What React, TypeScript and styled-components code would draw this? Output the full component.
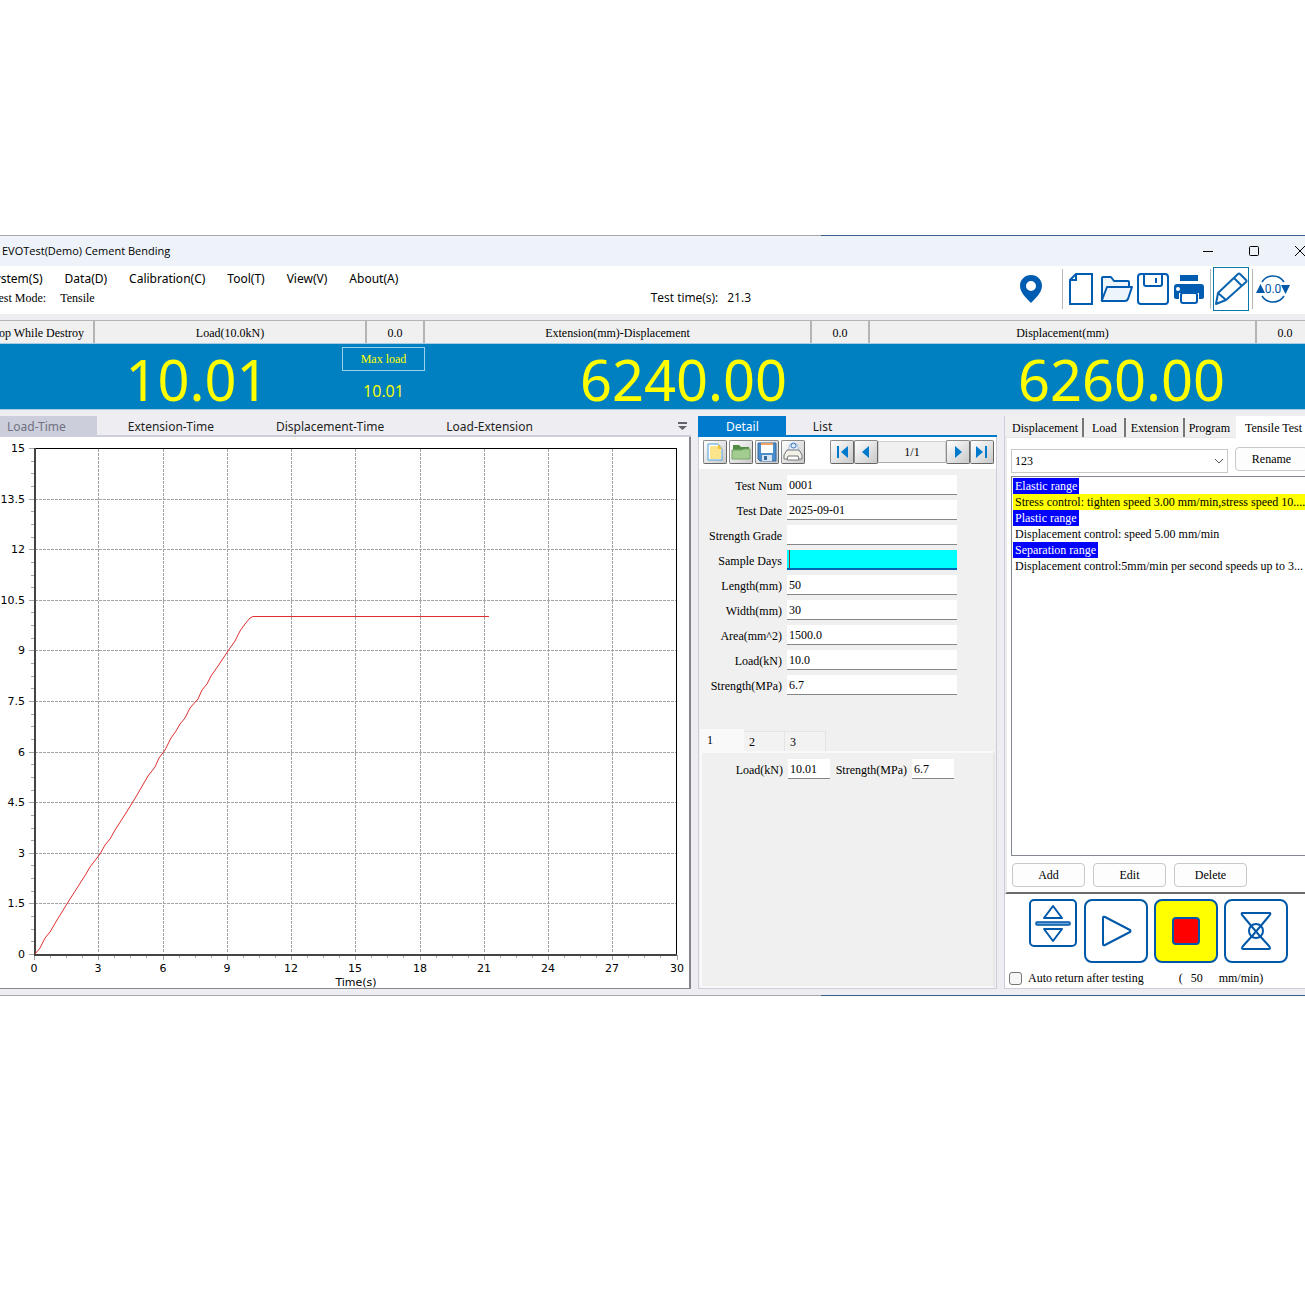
import React, { useState } from 'react';
import styled, { createGlobalStyle, css } from 'styled-components';

const serif = '"Liberation Serif", "Times New Roman", serif';
const sans = '"Open Sans", "Segoe UI", sans-serif';
const ui = '"Noto Sans", "Segoe UI", sans-serif';
const blue = '#0058a8';

const GlobalStyle = createGlobalStyle`
  * { box-sizing: border-box; }
  body { margin: 0; background: #fff; color: #000; font: 12px/16px ${serif}; }
  button, input, select { font: inherit; color: inherit; margin: 0; padding: 0; border: 0; border-radius: 0; background: none; outline: 0; }
  svg { display: block; }
`;

const Page = styled.div`
  overflow: hidden;
  padding: 235px 0;
`;

const AppWindow = styled.main`
  margin: 0 -10px 0 -20px;
  background: #eeeef2;
`;

const Edge = styled.div`
  height: 1px;
  background: linear-gradient(90deg, #a6a6ac 63%, #3c6188 63%);
`;

const TitleBar = styled.header`
  display: flex;
  align-items: center;
  justify-content: space-between;
  height: 30px;
  padding: 0 7px 1px 22px;
  background: #edf3f9;
`;

const Title = styled.h1`
  margin: 0;
  font: 11px/16px ${sans};
`;

const Captions = styled.div`
  display: flex;
  gap: 32px;
`;

const CaptionButton = styled.button`
  width: 14px;
  height: 14px;
`;

const Ribbon = styled.div`
  display: flex;
  height: 48px;
  background: #fff;
`;

const RibbonLeft = styled.div`
  flex: 1;
  display: flex;
  flex-direction: column;
  padding-top: 4px;
`;

const Menu = styled.nav`
  display: flex;
  gap: 22px;
  padding-left: 8px;
  font: 12px/18px ${ui};
`;

const MenuButton = styled.button`
  white-space: nowrap;
`;

const Status = styled.div`
  display: flex;
  align-items: center;
  height: 20px;
  padding: 0 262px 0 12px;
`;

const Mode = styled.span`
  margin-right: 14px;
`;

const Clock = styled.span`
  display: flex;
  gap: 9px;
  margin-left: auto;
  font: 12px/16px ${sans};
`;

const Tools = styled.div`
  display: flex;
  align-items: center;
  padding: 0 24px 2px 0;
`;

const ToolButton = styled.button<{ $active?: boolean }>`
  display: grid;
  place-items: center;
  width: 36px;
  height: 44px;
  ${p => p.$active && css`border: 1px solid #0a78a8;`}
`;

const Rule = styled.span<{ $wide?: boolean }>`
  width: 1px;
  height: 40px;
  margin: ${p => (p.$wide ? '0 0 0 13px' : '0 2px 0 3px')};
  background: #b8b8b8;
`;

const Meters = styled.section`
  display: grid;
  grid-template-columns: repeat(3, minmax(0, 1fr));
  padding-top: 6px;
`;

const MeterHead = styled.div`
  display: flex;
  height: 24px;
  border-top: 1px solid #b4b4b4;
  border-bottom: 1px solid #a8cde4;
  background: #f0f0f0;
`;

const HeadButton = styled.button<{ $width?: number }>`
  ${p => (p.$width ? `flex: 0 0 ${p.$width}px;` : 'flex: 1;')}
  padding-top: 2px;
  border-right: 2px solid #b4b4b4;
  white-space: nowrap;
`;

const MeterBody = styled.div`
  display: flex;
  height: 66px;
  border-bottom: 1px solid #a8cde4;
  background: #0080c0;
  color: #ff0;
`;

const Reading = styled.output<{ $inset: number }>`
  flex: 1;
  padding-left: ${p => p.$inset}px;
  text-align: center;
  font: 56px/70px ${ui};
`;

const Peak = styled.div`
  width: 83px;
  padding-top: 3px;
  text-align: center;
`;

const PeakButton = styled.button`
  width: 100%;
  height: 24px;
  border: 1px solid #9cd0ec;
`;

const PeakValue = styled.output`
  display: block;
  padding-top: 8px;
  font: 16px/24px ${sans};
`;

const Workspace = styled.div`
  display: grid;
  grid-template-columns: minmax(0, 1fr) 299px 311px;
  gap: 7px;
  padding: 6px 0;
`;

const Column = styled.section`
  display: flex;
  flex-direction: column;
  min-width: 0;
`;

const TabBar = styled.div<{ $color: string }>`
  display: flex;
  height: 21px;
  border-bottom: 2px solid ${p => p.$color};
`;

const Tab = styled.button<{ $active?: boolean; $tone?: 'grey' | 'blue' }>`
  padding: 1px ${p => (p.$tone === 'blue' ? 27 : 31)}px 0;
  font: 12px/20px ${ui};
  color: #1e1e1e;
  white-space: nowrap;
  ${p => p.$tone === 'grey' && css`background: #cccedb; color: #717182; padding: 1px 31px 0 27px;`}
  ${p => p.$tone === 'blue' && p.$active && css`padding-left: 28px; background: #007acc; color: #fff;`}
`;

const Overflow = styled.button`
  width: 18px;
  margin-left: auto;
`;

const ChartBox = styled.div`
  flex: 1;
  border-right: 2px solid #85858d;
  border-bottom: 1px solid #85858d;
  background: #fff;
`;

const DetailBody = styled.div`
  flex: 1;
  display: flex;
  flex-direction: column;
  border: 1px solid #cccedb;
  border-top: 0;
  background: #f0f0f0;
`;

const RecordBar = styled.div`
  display: flex;
  align-items: center;
  height: 32px;
  padding: 0 2px 2px 4px;
  gap: 2px;
  background: #fff;
`;

const RecordButton = styled.button`
  display: grid;
  place-items: center;
  width: 24px;
  height: 24px;
  border: 1px solid #8c8c8c;
  border-right-color: #666;
  border-bottom-color: #666;
  border-radius: 2px;
  background: linear-gradient(135deg, #fff, #c8c8c8);
`;

const Pager = styled.div`
  display: flex;
  align-items: center;
  margin-left: auto;
`;

const PageCount = styled.output`
  width: 68px;
  height: 22px;
  border: 1px solid #d0d0d0;
  border-bottom-color: #aaa;
  background: #f0f0f0;
  text-align: center;
  line-height: 20px;
`;

const Form = styled.form`
  display: grid;
  grid-template-columns: 83px 170px;
  gap: 5px;
  padding-top: 6px;
`;

const Label = styled.label`
  padding-top: 3px;
  text-align: right;
  white-space: nowrap;
`;

const Field = styled.input<{ $focus?: boolean }>`
  width: 100%;
  height: 20px;
  padding: 1px 2px 0;
  border-bottom: 1px solid #868686;
  background: #fff;
  ${p => p.$focus && css`
    border-bottom: 2px solid #0067b0;
    background: linear-gradient(90deg, #0ff 2px, #804040 2px, #804040 3px, #0ff 3px);
  `}
`;

const SpecimenTabs = styled.div`
  display: flex;
  align-items: flex-end;
  margin-top: 34px;
  padding-left: 1px;
`;

const SpecimenTab = styled.button<{ $active?: boolean }>`
  width: ${p => (p.$active ? 44 : 41)}px;
  height: ${p => (p.$active ? 22 : 20)}px;
  padding-left: ${p => (p.$active ? 7 : 5)}px;
  border: 1px solid #e4e4e4;
  border-width: ${p => (p.$active ? '0' : '1px 1px 0 0')};
  background: ${p => (p.$active ? '#f9f9f9' : '#f2f2f2')};
  text-align: left;
`;

const Specimen = styled.form`
  flex: 1;
  display: grid;
  grid-template-columns: 81px 42px 72px 42px;
  align-content: start;
  column-gap: 5px;
  margin: 0 1px;
  padding-top: 6px;
  border: 2px solid #f9f9f9;
  border-right: 2px solid #e8e8e8;
`;

const Control = styled.div`
  flex: 1;
  display: flex;
  flex-direction: column;
  border-left: 1px solid #cccedb;
  border-bottom: 1px solid #cccedb;
  background: #fff;
`;

const Modes = styled.div`
  display: flex;
  align-items: flex-end;
  height: 22px;
  padding-left: 3px;
  border-bottom: 1px solid #e6e6e6;
  background: #f0f0f0;
`;

const ModeTab = styled.button<{ $active?: boolean; $pad: number }>`
  height: 19px;
  margin-right: 1px;
  padding: 1px ${p => p.$pad}px 0;
  border-right: 2px solid #777;
  background: #f0f0f0;
  white-space: nowrap;
  &:nth-last-child(2) { border-color: transparent; }
  ${p => p.$active && css`border: 0; background: #fff; box-shadow: 0 -2px #fff, 0 1px #fff;`}
`;

const Program = styled.div`
  display: flex;
  flex-direction: column;
  height: 456px;
  padding: 9px 0 0 4px;
  border-left: 2px solid #ececec;
  border-bottom: 2px solid #6c6c6c;
`;

const ProgramHead = styled.div`
  display: flex;
  gap: 7px;
`;

const SelectBox = styled.div`
  display: flex;
  align-items: center;
  width: 217px;
  height: 24px;
  margin-top: 2px;
  padding-right: 3px;
  border: 1px solid #c8c8c8;
`;

const Select = styled.select`
  flex: 1;
  height: 100%;
  padding-left: 3px;
  appearance: none;
`;

const PushButton = styled.button`
  width: 73px;
  height: 24px;
  border: 1px solid #c8c8c8;
  border-radius: 4px;
  background: #fdfdfd;
`;

const Steps = styled.ul`
  flex: 1;
  margin: 3px 0 0;
  padding: 1px;
  border: 1px solid #828790;
  list-style: none;
`;

const Step = styled.li<{ $current?: boolean }>`
  padding-left: 2px;
  background: ${p => (p.$current ? '#ff0' : 'transparent')};
  white-space: nowrap;
`;

const StepHead = styled.li`
  width: max-content;
  padding: 0 2px;
  background: #00f;
  color: #fff;
`;

const Actions = styled.div`
  display: flex;
  gap: 8px;
  padding: 7px 0 5px 1px;
`;

const Machine = styled.div`
  display: flex;
  gap: 6px;
  padding: 5px 0 0 24px;
`;

const MachineButton = styled.button<{ $small?: boolean; $stop?: boolean }>`
  display: grid;
  place-items: center;
  width: ${p => (p.$small ? 48 : 64)}px;
  height: ${p => (p.$small ? 48 : 64)}px;
  margin-right: ${p => (p.$small ? 1 : 0)}px;
  border: 2px solid ${blue};
  border-radius: ${p => (p.$small ? 5 : 8)}px;
  background: ${p => (p.$stop ? '#ff0' : '#fff')};
`;

const ReturnRow = styled.div`
  display: flex;
  align-items: center;
  padding: 7px 0 0 4px;
`;

const Check = styled.input`
  appearance: none;
  width: 13px;
  height: 13px;
  margin-right: 6px;
  border: 1px solid #777;
  border-radius: 3px;
  background: #f6f6f6;
`;

const Speed = styled.span`
  display: flex;
  gap: 8px;
  margin-left: 35px;
`;

const SpeedInput = styled.input`
  width: 20px;
`;

const X0 = 34;
const Y0 = 954;
const STEP_X = 64.25;
const STEP_Y = 50.6;
const xs = Array.from({ length: 11 }, (_, i) => Math.round(X0 + i * STEP_X));
const ys = Array.from({ length: 11 }, (_, i) => Math.round(Y0 - i * STEP_Y));
const curve =
  '35,954 40,948 45,938 50,932 57,920 70,899 86,874 90,867 100,854 105,845 110,839 115,830 126,813 137,795 148,776 155,767 159,758 165,750 171,738 176,731 180,724 185,718 190,708 198,699 202,690 207,684 211,676 218,666 230,648 235,641 240,631 245,624 250,618 253,616.5 489,616.5';

function Chart() {
  return (
    <svg viewBox="-20 437 709 551" width="100%" role="img" aria-label="Load against time">
      <g shapeRendering="crispEdges" stroke="#a4a4a4" fill="none">
        {xs.slice(1, 10).map(x => <path key={x} d={`M${x}.5 449V953`} strokeDasharray="3 1" />)}
        {ys.slice(1, 10).map(y => <path key={y} d={`M35 ${y}.5H677`} strokeDasharray="3 1" />)}
        {xs.map(x => <path key={x} d={`M${x}.5 955v5`} />)}
        {ys.map(y => <path key={y} d={`M29 ${y}.5h5`} />)}
        {Array.from({ length: 40 }, (_, i) => <path key={i} d={`M${Math.round(X0 + (i * STEP_X) / 4)}.5 956v2`} />)}
        {Array.from({ length: 40 }, (_, i) => <path key={i} d={`M31 ${Math.round(Y0 - (i * STEP_Y) / 4)}.5h3`} />)}
        <path d="M34 448.5H676.5V954" stroke="#000" />
        <path d="M34.5 448V954.5H677" stroke="#444" strokeWidth="2" />
      </g>
      <polyline points={curve} fill="none" stroke="#e03030" />
      <g fontFamily='"DejaVu Sans", Verdana, sans-serif' fontSize="11" fill="#000">
        {ys.map((y, i) => <text key={y} x="25" y={y + 4} textAnchor="end">{i * 1.5}</text>)}
        {xs.map((x, i) => <text key={x} x={x} y="972" textAnchor="middle">{i * 3}</text>)}
        <text x="356" y="986" textAnchor="middle">Time(s)</text>
      </g>
    </svg>
  );
}

const PinIcon = () => (
  <svg width="24" height="30" viewBox="0 0 24 30"><path fillRule="evenodd" fill="#005cb0" d="M12 1C5.700 1 1 5.700 1 12c0 6 6 12 11 17 5-5 11-11 11-17C23 5.700 18.300 1 12 1Zm0 6a5 5 0 1 1 0 10 5 5 0 0 1 0-10Z" /></svg>
);
const FileIcon = () => (
  <svg width="26" height="34" viewBox="0 0 26 34" fill="none" stroke="#005cb0" strokeWidth="2"><path d="M8 2H24V32H2V8ZM8 2V8H2" /></svg>
);
const FolderIcon = () => (
  <svg width="34" height="28" viewBox="0 0 34 28" fill="#edf5fb" stroke="#005cb0" strokeWidth="2" strokeLinejoin="round"><path d="M2 26V3q0-1 1-1h8l3 4h14q1 0 1 1v5" /><path d="M2 25 7 12H32L28 24q-1 2-3 2H3Q1 26 2 25Z" /></svg>
);
const SaveIcon = () => (
  <svg width="34" height="34" viewBox="0 0 34 34" fill="none" stroke="#005cb0" strokeWidth="2"><rect x="2" y="2" width="30" height="30" rx="3" /><path d="M8 2V12q0 2 2 2H24q2 0 2-2V2M20 6v5" /></svg>
);
const PrintIcon = () => (
  <svg width="32" height="30" viewBox="0 0 32 30" fill="#005cb0"><path d="M7 1H25V7H7ZM4 10H28q3 0 3 3V23q0 2-2 2H26V19H6V25H3q-2 0-2-2V13q0-3 3-3Z" /><rect x="8" y="19" width="16" height="10" rx="2" fill="#fff" stroke="#005cb0" strokeWidth="2" /><circle cx="5" cy="15" r="2" fill="#fff" /></svg>
);
const PencilIcon = () => (
  <svg width="34" height="34" viewBox="0 0 34 34" fill="none" stroke="#0a64b0" strokeWidth="2" strokeLinejoin="round"><path d="M2 32 4 21 24 2Q25 1 26 2L32 8Q33 9 32 10L12 28ZM4 21l8 7M20 6l8 8" /></svg>
);
const ZeroIcon = () => (
  <svg width="34" height="30" viewBox="0 0 34 30" fill="none" stroke={blue} strokeWidth="1.500"><path d="M6 8a13 13 0 0 1 22 0M6 22a13 13 0 0 0 22 0" /><path fill={blue} stroke="none" d="M0 19 4.500 10 9 19ZM25 11h9l-4.500 9Z" /><text x="17" y="19" fontFamily='Roboto, "Liberation Sans", sans-serif' fontSize="12" textAnchor="middle" fill={blue} stroke="none">0.0</text></svg>
);
const NewSmall = () => (
  <svg width="18" height="18" viewBox="0 0 18 18"><path d="M2 1H12L16 6V17H2Z" fill="#fff" stroke="#4aa0d8" /><path d="M4 3h8l3 4v9H4Z" fill="#fbe48c" /><path d="m12 1 4 5h-4Z" fill="#f4c430" /></svg>
);
const OpenSmall = () => (
  <svg width="20" height="20" viewBox="0 0 20 20"><path d="M2 16V3h6l2 2h8v11Z" fill="#528c45" /><path d="M1 17V8h10l2-1h6v10Z" fill="#a3cc90" stroke="#76a666" /></svg>
);
const SaveSmall = () => (
  <svg width="20" height="20" viewBox="0 0 20 20"><path d="M1 1H19V19H3L1 17Z" fill="#4b8ccb" stroke="#3268a0" /><path d="M4 1H16V11H4Z" fill="#fff" /><path d="M4 1H16V3H4Z" fill="#f0a060" /><path d="M5 13H15V19H5Z" fill="#d8e4f0" /><path d="M7 14h3v4H7Z" fill="#3268a0" /></svg>
);
const PrintSmall = () => (
  <svg width="20" height="20" viewBox="0 0 20 20" stroke="#777"><path d="M5 9 7 2h7l2 7Z" fill="#e4eefa" stroke="#b0c4dc" /><circle cx="10.500" cy="3.500" r="2.500" fill="none" stroke="#3c78c0" /><path d="M1 13 4 8H16l3 5v4H1Z" fill="#f1f1e8" /><path d="M4 18l1-4H15l1 4Z" fill="#fff" /></svg>
);
const Arrow = ({ back, end }: { back?: boolean; end?: boolean }) => (
  <svg width="16" height="16" viewBox="0 0 16 16" fill="#0078cc"><g transform={back ? 'rotate(180 8 8)' : undefined}><path d={end ? 'M2 2 9 8 2 14ZM11 2h2v12h-2Z' : 'M5 2 12 8 5 14Z'} /></g></svg>
);

const fields: [string, string][] = [
  ['Test Num', '0001'], ['Test Date', '2025-09-01'], ['Strength Grade', ''], ['Sample Days', ''],
  ['Length(mm)', '50'], ['Width(mm)', '30'], ['Area(mm^2)', '1500.0'], ['Load(kN)', '10.0'], ['Strength(MPa)', '6.7'],
];

export default function App() {
  const [specimen, setSpecimen] = useState(1);
  return (
    <Page>
      <GlobalStyle />
      <AppWindow>
        <Edge />
        <TitleBar>
          <Title>EVOTest(Demo) Cement Bending</Title>
          <Captions>
            <CaptionButton aria-label="Minimize"><svg width="12" height="12" viewBox="0 0 12 12"><path d="M1 6.500h10" stroke="#000" /></svg></CaptionButton>
            <CaptionButton aria-label="Maximize"><svg width="12" height="12" viewBox="0 0 12 12"><rect x="1.500" y="1.500" width="9" height="9" rx="1" fill="none" stroke="#000" /></svg></CaptionButton>
            <CaptionButton aria-label="Close"><svg width="12" height="12" viewBox="0 0 12 12"><path d="M1 1 11 11M11 1 1 11" stroke="#000" /></svg></CaptionButton>
          </Captions>
        </TitleBar>

        <Ribbon>
          <RibbonLeft>
            <Menu>
              {['System(S)', 'Data(D)', 'Calibration(C)', 'Tool(T)', 'View(V)', 'About(A)'].map(m => <MenuButton key={m}>{m}</MenuButton>)}
            </Menu>
            <Status>
              <Mode>Test Mode:</Mode>
              <span>Tensile</span>
              <Clock><span>Test time(s):</span><span>21.3</span></Clock>
            </Status>
          </RibbonLeft>
          <Tools>
            <ToolButton aria-label="Location"><PinIcon /></ToolButton>
            <Rule $wide />
            <ToolButton aria-label="New"><FileIcon /></ToolButton>
            <ToolButton aria-label="Open"><FolderIcon /></ToolButton>
            <ToolButton aria-label="Save"><SaveIcon /></ToolButton>
            <ToolButton aria-label="Print"><PrintIcon /></ToolButton>
            <Rule />
            <ToolButton aria-label="Edit" $active><PencilIcon /></ToolButton>
            <Rule />
            <ToolButton aria-label="Zero all"><ZeroIcon /></ToolButton>
          </Tools>
        </Ribbon>

        <Meters>
          <div>
            <MeterHead>
              <HeadButton $width={115}>Stop While Destroy</HeadButton>
              <HeadButton>Load(10.0kN)</HeadButton>
              <HeadButton $width={58}>0.0</HeadButton>
            </MeterHead>
            <MeterBody>
              <Reading $inset={72}>10.01</Reading>
              <Peak>
                <PeakButton>Max load</PeakButton>
                <PeakValue>10.01</PeakValue>
              </Peak>
            </MeterBody>
          </div>
          <div>
            <MeterHead>
              <HeadButton>Extension(mm)-Displacement</HeadButton>
              <HeadButton $width={58}>0.0</HeadButton>
            </MeterHead>
            <MeterBody><Reading $inset={72}>6240.00</Reading></MeterBody>
          </div>
          <div>
            <MeterHead>
              <HeadButton>Displacement(mm)</HeadButton>
              <HeadButton $width={58}>0.0</HeadButton>
            </MeterHead>
            <MeterBody><Reading $inset={58}>6260.00</Reading></MeterBody>
          </div>
        </Meters>

        <Workspace>
          <Column>
            <TabBar $color="#cccedb">
              <Tab $tone="grey">Load-Time</Tab>
              <Tab>Extension-Time</Tab>
              <Tab>Displacement-Time</Tab>
              <Tab>Load-Extension</Tab>
              <Overflow aria-label="More charts"><svg width="18" height="18" viewBox="0 0 18 18" fill="#62626a"><path d="M5 5h9v2H5ZM5 9h9l-4.500 4Z" /></svg></Overflow>
            </TabBar>
            <ChartBox><Chart /></ChartBox>
          </Column>

          <Column>
            <TabBar $color="#007acc">
              <Tab $tone="blue" $active>Detail</Tab>
              <Tab $tone="blue">List</Tab>
            </TabBar>
            <DetailBody>
              <RecordBar>
                <RecordButton aria-label="New record"><NewSmall /></RecordButton>
                <RecordButton aria-label="Open record"><OpenSmall /></RecordButton>
                <RecordButton aria-label="Save record"><SaveSmall /></RecordButton>
                <RecordButton aria-label="Print record"><PrintSmall /></RecordButton>
                <Pager>
                  <RecordButton aria-label="First"><Arrow back end /></RecordButton>
                  <RecordButton aria-label="Previous"><Arrow back /></RecordButton>
                  <PageCount>1/1</PageCount>
                  <RecordButton aria-label="Next"><Arrow /></RecordButton>
                  <RecordButton aria-label="Last"><Arrow end /></RecordButton>
                </Pager>
              </RecordBar>
              <Form>
                {fields.map(([name, value], i) => (
                  <React.Fragment key={name}>
                    <Label htmlFor={`field-${i}`}>{name}</Label>
                    <Field id={`field-${i}`} defaultValue={value} $focus={name === 'Sample Days'} />
                  </React.Fragment>
                ))}
              </Form>
              <SpecimenTabs>
                {[1, 2, 3].map(n => <SpecimenTab key={n} $active={n === specimen} onClick={() => setSpecimen(n)}>{n}</SpecimenTab>)}
              </SpecimenTabs>
              <Specimen>
                <Label htmlFor="specimen-load">Load(kN)</Label>
                <Field id="specimen-load" defaultValue="10.01" />
                <Label htmlFor="specimen-strength">Strength(MPa)</Label>
                <Field id="specimen-strength" defaultValue="6.7" />
              </Specimen>
            </DetailBody>
          </Column>

          <Column>
            <Control>
              <Modes>
                <ModeTab $pad={4}>Displacement</ModeTab>
                <ModeTab $pad={7}>Load</ModeTab>
                <ModeTab $pad={4}>Extension</ModeTab>
                <ModeTab $pad={3}>Program</ModeTab>
                <ModeTab $pad={9} $active>Tensile Test</ModeTab>
              </Modes>
              <Program>
                <ProgramHead>
                  <SelectBox>
                    <Select aria-label="Program name" defaultValue="123"><option>123</option></Select>
                    <svg width="10" height="10" viewBox="0 0 10 10"><path d="m1 3 4 4 4-4" fill="none" stroke="#555" /></svg>
                  </SelectBox>
                  <PushButton>Rename</PushButton>
                </ProgramHead>
                <Steps>
                  <StepHead>Elastic range</StepHead>
                  <Step $current>Stress control: tighten speed 3.00 mm/min,stress speed 10....</Step>
                  <StepHead>Plastic range</StepHead>
                  <Step>Displacement control: speed 5.00 mm/min</Step>
                  <StepHead>Separation range</StepHead>
                  <Step>Displacement control:5mm/min per second speeds up to 3...</Step>
                </Steps>
                <Actions>
                  <PushButton>Add</PushButton>
                  <PushButton>Edit</PushButton>
                  <PushButton>Delete</PushButton>
                </Actions>
              </Program>
              <Machine>
                <MachineButton $small aria-label="Jog">
                  <svg width="38" height="40" viewBox="0 0 38 40" fill="none" stroke={blue} strokeWidth="2" strokeLinejoin="round"><path d="M19 3 28 15H10ZM10 26H28L19 38Z" /><rect x="2" y="19" width="34" height="3" rx="1" fill="#6aa4d8" strokeWidth="1.500" /></svg>
                </MachineButton>
                <MachineButton aria-label="Start">
                  <svg width="32" height="32" viewBox="0 0 32 32" fill="none" stroke={blue} strokeWidth="2" strokeLinejoin="round"><path d="M3 3q0-2 2-1L30 15q1 1 0 2L5 30q-2 1-2-1Z" /></svg>
                </MachineButton>
                <MachineButton $stop aria-label="Stop">
                  <svg width="30" height="30" viewBox="0 0 30 30"><rect x="2" y="2" width="26" height="26" rx="3" fill="#f00" stroke={blue} strokeWidth="2" /></svg>
                </MachineButton>
                <MachineButton aria-label="Return">
                  <svg width="34" height="40" viewBox="0 0 34 40" fill="none" stroke={blue} strokeWidth="2" strokeLinejoin="round"><path d="M3 2H31Q32 3 30 5L20 17 14 24 4 35Q2 38 4 38H30Q32 38 30 35L20 24 14 17 4 5Q2 3 3 2Z" /><circle cx="17" cy="20" r="7" /></svg>
                </MachineButton>
              </Machine>
              <ReturnRow>
                <Check type="checkbox" id="auto-return" />
                <label htmlFor="auto-return">Auto return after testing</label>
                <Speed>
                  <span>(</span>
                  <SpeedInput aria-label="Return speed" defaultValue="50" />
                  <span>mm/min)</span>
                </Speed>
              </ReturnRow>
            </Control>
          </Column>
        </Workspace>
        <Edge />
      </AppWindow>
    </Page>
  );
}
